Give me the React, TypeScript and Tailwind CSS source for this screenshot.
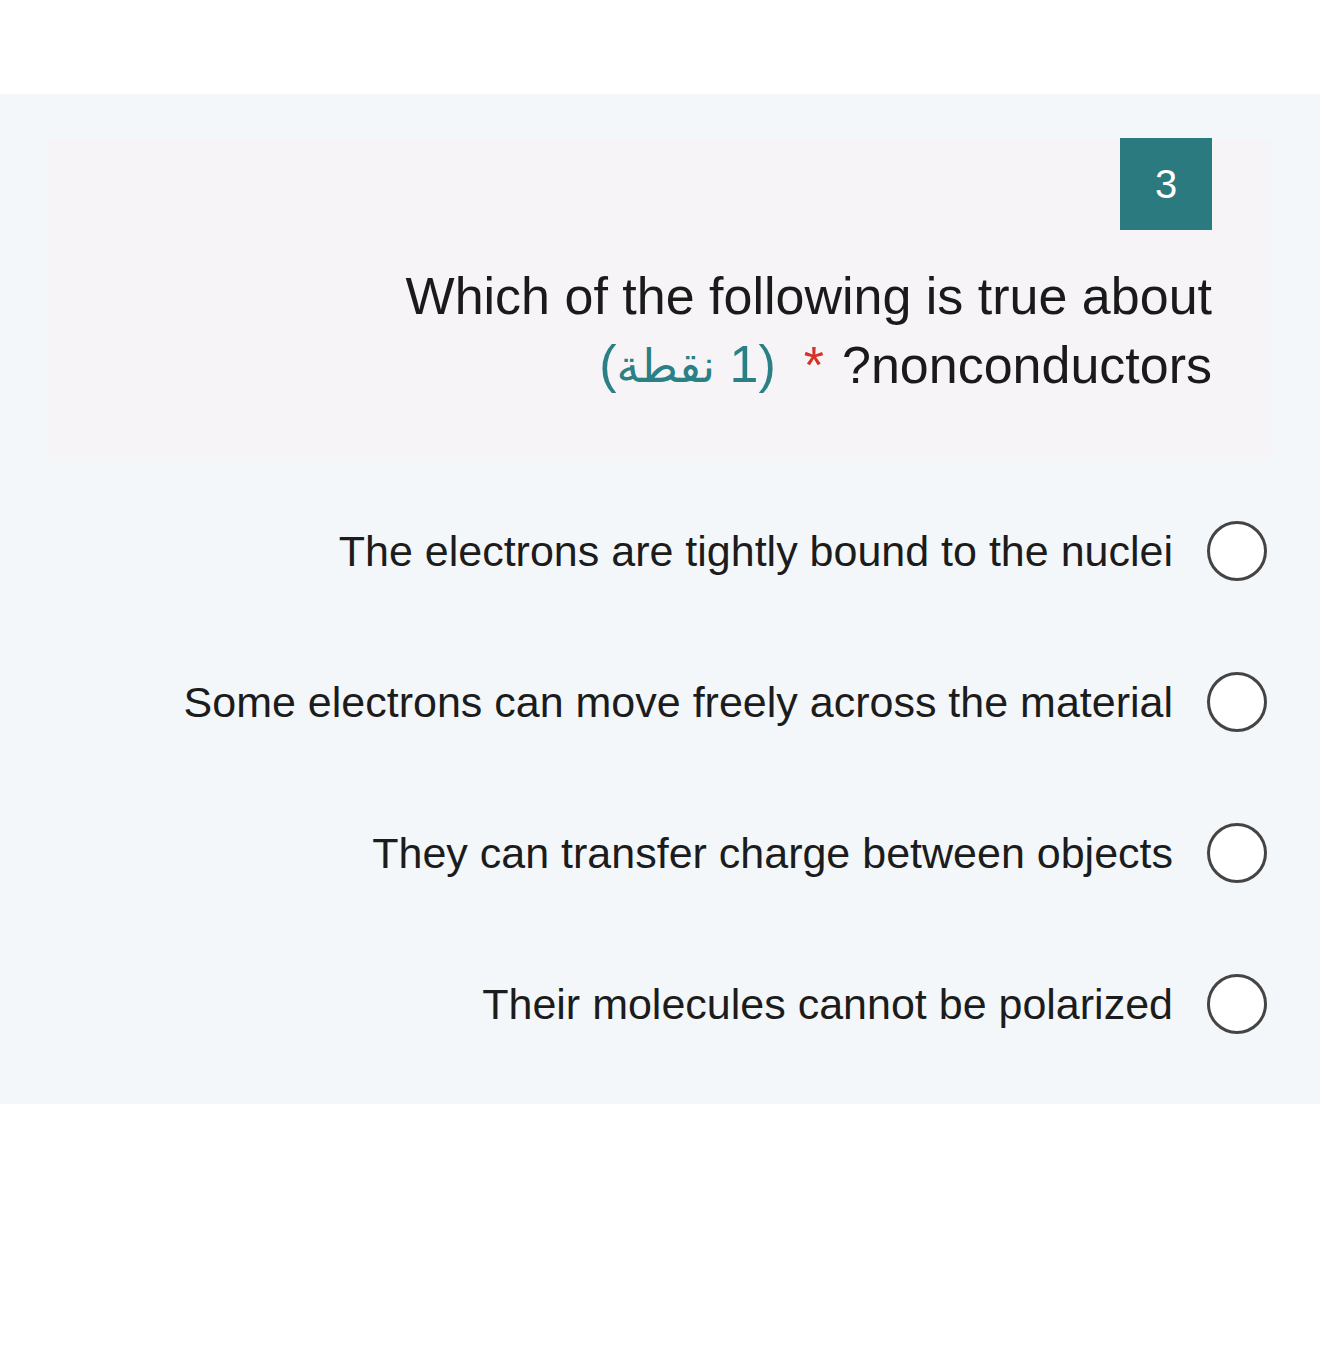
import React from "react";

const options = [
  "The electrons are tightly bound to the nuclei",
  "Some electrons can move freely across the material",
  "They can transfer charge between objects",
  "Their molecules cannot be polarized",
];

export default function App() {
  return (
    <div
      className="min-h-[1361px] w-full bg-white"
      style={{ fontFamily: '"Liberation Sans", "DejaVu Sans", Arial, sans-serif' }}
    >
      <div className="h-[94px]" />
      <div className="bg-[#f3f7f9] pt-[46px] pb-[70px]">
        <div className="mx-[48px] bg-[#f6f4f7] pr-[60px] pb-[57px]">
          <div className="flex justify-end">
            <div className="flex h-[92px] w-[92px] -mt-[2px] items-center justify-center bg-[#2b7a7f] text-[40px] text-white">
              3
            </div>
          </div>
          <div className="mt-[32px] text-[52px] leading-[68px] text-[#1a1a1a]">
            <div dir="rtl" className="text-right">
              Which of the following is true about
            </div>
            <div dir="rtl" className="flex items-center">
              <span>nonconductors?</span>
              <span className="ms-[18px] me-[28px] text-[#d93025]">*</span>
              <span className="text-[#2b8085]">
                (1 <span className="text-[46px]">نقطة</span>)
              </span>
            </div>
          </div>
        </div>
        <div className="mt-[64px] flex flex-col gap-[91px] pr-[53px]">
          {options.map((o) => (
            <label key={o} dir="rtl" className="flex items-center">
              <span className="h-[60px] w-[60px] shrink-0 rounded-full border-[3px] border-[#444444] bg-white" />
              <span className="ms-[34px] text-[43px] leading-[60px] text-[#1c1c1c]">{o}</span>
            </label>
          ))}
        </div>
      </div>
    </div>
  );
}
